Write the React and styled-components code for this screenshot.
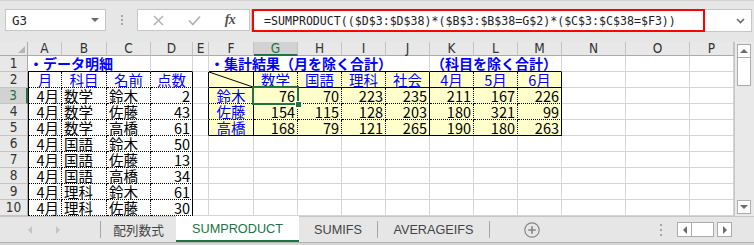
import React from 'react';
import styled, { createGlobalStyle, css } from 'styled-components';

const Global = createGlobalStyle`
  html, body { margin: 0; padding: 0; background: #e6e6e6; }
  body { width: 754px; height: 245px; overflow: hidden; }
`;

const GREEN = '#217346';

const Window = styled.div`
  width: 754px;
  height: 245px;
  display: flex;
  flex-direction: column;
  background: #e6e6e6;
  overflow: hidden;
  font-family: "Noto Sans CJK JP", sans-serif;
`;

/* ---------- formula bar ---------- */
const FormulaBar = styled.div`
  height: 42px;
  flex: none;
  box-sizing: border-box;
  border-top: 1px solid #d2d2d2;
  padding: 8px 2px 0 5px;
  display: flex;
  align-items: flex-start;
`;

const NameBox = styled.div`
  width: 101px;
  height: 22px;
  box-sizing: border-box;
  background: #fff;
  border: 1px solid #c6c6c6;
  display: flex;
  align-items: center;
  justify-content: space-between;
  padding: 0 6px 0 6px;
  font-family: "DejaVu Sans Mono", monospace;
  font-size: 12.5px;
  color: #222;
`;

const DownTri = styled.span`
  width: 0;
  height: 0;
  border-left: 4px solid transparent;
  border-right: 4px solid transparent;
  border-top: 4px solid #6a6a6a;
`;

const Grip = styled.div`
  width: 31px;
  height: 22px;
  display: flex;
  flex-direction: column;
  align-items: center;
  justify-content: center;
  gap: 2px;
`;

const GripDot = styled.span`
  width: 2px;
  height: 2px;
  background: #a6a6a6;
`;

const FxBox = styled.div`
  width: 113px;
  height: 22px;
  box-sizing: border-box;
  background: #fff;
  border: 1px solid #c6c6c6;
  display: flex;
  align-items: center;
  padding-left: 2px;
`;

const FxSlot = styled.div`
  width: 36px;
  height: 20px;
  display: flex;
  align-items: center;
  justify-content: center;
`;

const FxText = styled.span`
  font-family: "Liberation Serif", serif;
  font-style: italic;
  font-weight: 700;
  font-size: 14px;
  color: #555;
  letter-spacing: -0.5px;
`;

const FormulaInput = styled.div`
  flex: 1;
  height: 23px;
  margin-left: 1px;
  box-sizing: border-box;
  background: #fff;
  border: 1px solid #c6c6c6;
  display: flex;
  align-items: stretch;
`;

const Highlight = styled.div`
  width: 453px;
  margin: -1px 0 -1px 0;
  box-sizing: border-box;
  border: 2px solid #ff0000;
  display: flex;
  align-items: center;
  padding-left: 10px;
  font-family: "DejaVu Sans Mono", monospace;
  font-size: 11.6px;
  color: #222;
  white-space: nowrap;
`;

const Chevron = styled.div`
  margin-left: auto;
  width: 22px;
  display: flex;
  align-items: center;
  justify-content: center;
`;

/* ---------- sheet ---------- */
const Main = styled.div`
  height: 174px;
  flex: none;
  display: flex;
`;

const COLS = ['A','B','C','D','E','F','G','H','I','J','K','L','M','N','O','P'];
const WIDTHS = [34,45,44,42,16,45,44,44,44,44,44,44,44,64,64,44];

const Grid = styled.div`
  width: 734px;
  flex: none;
  display: grid;
  grid-template-columns: 28px ${WIDTHS.map(w => w + 'px').join(' ')};
  grid-template-rows: 14px repeat(10, 16px);
  background: #fff;
  overflow: hidden;
`;

const headFont = css`
  font-family: "Liberation Sans Narrow", "DejaVu Sans Condensed", "Liberation Sans", sans-serif;
  font-stretch: condensed;
  font-size: 13.5px;
`;

const Corner = styled.div`
  background: #e8e8e8;
  border-right: 1px solid #ababab;
  border-bottom: 1px solid #ababab;
  box-sizing: border-box;
  display: flex;
  align-items: flex-end;
  justify-content: flex-end;
  padding: 0 2px 2px 0;
`;

const ColHead = styled.div`
  ${headFont};
  box-sizing: border-box;
  background: ${p => (p.$active ? '#d2d2d2' : '#e8e8e8')};
  color: ${p => (p.$active ? GREEN : '#333')};
  border-right: 1px solid #c3c3c3;
  border-bottom: ${p => (p.$active ? `2px solid ${GREEN}` : '1px solid #ababab')};
  display: flex;
  align-items: center;
  justify-content: center;
  line-height: 13px;
`;

const RowHead = styled.div`
  ${headFont};
  box-sizing: border-box;
  background: ${p => (p.$active ? '#d2d2d2' : '#e8e8e8')};
  color: ${p => (p.$active ? GREEN : '#333')};
  border-right: ${p => (p.$active ? `2px solid ${GREEN}` : '1px solid #ababab')};
  border-bottom: 1px solid #c3c3c3;
  display: flex;
  align-items: center;
  justify-content: center;
  line-height: 15px;
`;

const BD = {
  g: '1px solid #d4d4d4',
  s: '1px solid #000',
  d: '1px dotted #000',
};

const Cell = styled.div`
  position: relative;
  box-sizing: border-box;
  min-width: 0;
  grid-column: span ${p => p.$span || 1};
  border-right: ${p => BD[p.$r || 'g']};
  border-bottom: ${p => BD[p.$b || 'g']};
  border-left: ${p => (p.$l ? BD[p.$l] : 'none')};
  background: ${p => p.$bg || '#fff'};
  display: flex;
  align-items: flex-end;
  justify-content: ${p => (p.$align === 'right' ? 'flex-end' : p.$align === 'center' ? 'center' : 'flex-start')};
  padding: 0 2px 0 ${p => (p.$bold ? '1px' : '2px')};
  font-family: "Liberation Sans Narrow", "Noto Sans CJK JP", sans-serif;
  font-size: ${p => (p.$bold ? '14px' : '14.5px')};
  line-height: 15px;
  color: ${p => (p.$blue ? '#0000ff' : '#000')};
  font-weight: ${p => (p.$bold ? 700 : 400)};
  white-space: nowrap;
  overflow: visible;
`;

const Diag = styled.svg`
  position: absolute;
  left: 0;
  top: 0;
  width: 100%;
  height: 100%;
`;

const Selection = styled.div`
  position: absolute;
  top: -2px;
  left: -2px;
  right: -2px;
  bottom: -2px;
  border: 2px solid ${GREEN};
  z-index: 3;
  pointer-events: none;
`;

const Handle = styled.div`
  position: absolute;
  right: -5px;
  bottom: -5px;
  width: 5px;
  height: 5px;
  background: ${GREEN};
  border: 1px solid #fff;
`;

/* ---------- vertical scroll ---------- */
const VScroll = styled.div`
  flex: 1;
  box-sizing: border-box;
  border-left: 1px solid #c6c6c6;
  background: #e9e9e9;
  padding: 2px 3px 2px 2px;
  display: flex;
  flex-direction: column;
`;

const ScrollBtn = styled.div`
  height: 14px;
  box-sizing: border-box;
  background: #fff;
  border: 1px solid #ababab;
  display: flex;
  align-items: center;
  justify-content: center;
`;

const VThumb = styled.div`
  height: 28px;
  box-sizing: border-box;
  background: #fff;
  border: 1px solid #ababab;
  border-top: none;
`;

const Spacer = styled.div`
  flex: 1;
`;

const Tri = styled.span`
  width: 0;
  height: 0;
  ${p => p.$dir === 'up' && css`
    border-left: 4px solid transparent;
    border-right: 4px solid transparent;
    border-bottom: 4px solid ${p.$c || '#6a6a6a'};
  `}
  ${p => p.$dir === 'down' && css`
    border-left: 4px solid transparent;
    border-right: 4px solid transparent;
    border-top: 4px solid ${p.$c || '#6a6a6a'};
  `}
  ${p => p.$dir === 'left' && css`
    border-top: 4px solid transparent;
    border-bottom: 4px solid transparent;
    border-right: 4px solid ${p.$c || '#6a6a6a'};
  `}
  ${p => p.$dir === 'right' && css`
    border-top: 4px solid transparent;
    border-bottom: 4px solid transparent;
    border-left: 4px solid ${p.$c || '#6a6a6a'};
  `}
`;

/* ---------- tab bar ---------- */
const TabBar = styled.div`
  height: 26px;
  flex: none;
  box-sizing: border-box;
  border-top: 1px solid #c6c6c6;
  background: #e6e6e6;
  display: flex;
  align-items: stretch;
`;

const NavArea = styled.div`
  width: 100px;
  display: flex;
  align-items: center;
  padding-left: 28px;
  gap: 24px;
  box-sizing: border-box;
`;

const TabSep = styled.div`
  width: 1px;
  height: 17px;
  align-self: center;
  background: #a6a6a6;
`;

const Tab = styled.div`
  width: ${p => p.$w}px;
  flex: none;
  display: flex;
  align-items: center;
  justify-content: center;
  font-family: "Liberation Sans", "Noto Sans CJK JP", sans-serif;
  font-size: 12.7px;
  color: #444;
  box-sizing: border-box;
  ${p => p.$active && css`
    background: #fff;
    color: ${GREEN};
    margin-top: -1px;
    border-bottom: 2px solid ${GREEN};
    padding-top: 2px;
  `}
`;

const AddBtn = styled.div`
  margin-left: 34px;
  width: 16px;
  display: flex;
  align-items: center;
`;

const TabDots = styled.div`
  margin-left: 119px;
  width: 3px;
  display: flex;
  flex-direction: column;
  justify-content: center;
  align-items: center;
  gap: 3px;
`;

const HScroll = styled.div`
  margin-left: 15px;
  display: flex;
  align-items: center;
`;

const HBtn = styled.div`
  width: 15px;
  height: 15px;
  box-sizing: border-box;
  background: #fff;
  border: 1px solid #ababab;
  display: flex;
  align-items: center;
  justify-content: center;
`;

const HThumb = styled.div`
  width: 22px;
  height: 15px;
  box-sizing: border-box;
  background: #fff;
  border: 1px solid #ababab;
  border-left: none;
  margin-right: 3px;
`;

const BottomEdge = styled.div`
  height: 3px;
  flex: none;
  background: #d6d6d6;
  border-top: 1px solid #b4b4b4;
  box-sizing: border-box;
`;

/* ---------- data ---------- */
const LEFT_HEAD = ['月', '科目', '名前', '点数'];
const LEFT = [
  ['4月', '数学', '鈴木', '2'],
  ['4月', '数学', '佐藤', '43'],
  ['4月', '数学', '高橋', '61'],
  ['4月', '国語', '鈴木', '50'],
  ['4月', '国語', '佐藤', '13'],
  ['4月', '国語', '高橋', '34'],
  ['4月', '理科', '鈴木', '61'],
  ['4月', '理科', '佐藤', '30'],
];
const SUM_HEAD = ['数学', '国語', '理科', '社会', '4月', '5月', '6月'];
const SUM_ROWS = [
  ['鈴木', 76, 70, 223, 235, 211, 167, 226],
  ['佐藤', 154, 115, 128, 203, 180, 321, 99],
  ['高橋', 168, 79, 121, 265, 190, 180, 263],
];
const YELLOW = '#ffffcc';

function rowCells(r) {
  const cells = [];
  let ci = 0;
  while (ci < COLS.length) {
    const c = COLS[ci];
    let spec = { key: c + r };
    if (r === 1) {
      if (c === 'A') spec = { ...spec, span: 3, text: '・データ明細', blue: true, bold: true, b: 's' };
      else if (c === 'D') spec = { ...spec, b: 's' };
      else if (c === 'F') spec = { ...spec, span: 5, text: '・集計結果（月を除く合計）', blue: true, bold: true, b: 's' };
      else if (c === 'K') spec = { ...spec, span: 3, text: '（科目を除く合計）', blue: true, bold: true, b: 's' };
    } else {
      const li = 'ABCD'.indexOf(c);
      if (li >= 0) {
        const val = r === 2 ? LEFT_HEAD[li] : LEFT[r - 3][li];
        spec = {
          ...spec,
          text: val,
          blue: r === 2,
          align: r === 2 ? 'center' : li === 0 || li === 3 ? 'right' : 'left',
          l: li === 0 ? 's' : undefined,
          r: li === 3 ? 's' : 'd',
          b: 'd',
        };
      } else if (c === 'E' && r <= 5) {
        spec = { ...spec, r: 's' };
      } else if (r <= 5) {
        const si = 'FGHIJKLM'.indexOf(c);
        if (si >= 0) {
          const rr = c === 'F' || c === 'J' || c === 'M' ? 's' : 'd';
          const bb = r === 2 || r === 5 ? 's' : 'd';
          spec = { ...spec, r: rr, b: bb, bg: YELLOW };
          if (r === 2) {
            if (si === 0) spec.diag = true;
            else spec = { ...spec, text: SUM_HEAD[si - 1], blue: true, align: 'center' };
          } else {
            const row = SUM_ROWS[r - 3];
            if (si === 0) spec = { ...spec, text: row[0], blue: true, align: 'center' };
            else spec = { ...spec, text: String(row[si]), align: 'right' };
            if (c === 'G' && r === 3) spec.selected = true;
          }
        }
      }
    }
    cells.push(spec);
    ci += spec.span || 1;
  }
  return cells;
}

const ROWS = Array.from({ length: 10 }, (_, i) => i + 1);

export default function App() {
  return (
    <>
      <Global />
      <Window>
        <FormulaBar>
          <NameBox>
            <span>G3</span>
            <DownTri />
          </NameBox>
          <Grip>
            <GripDot />
            <GripDot />
            <GripDot />
          </Grip>
          <FxBox>
            <FxSlot>
              <svg width="11" height="11" viewBox="0 0 11 11">
                <path d="M1 1 L10 10 M10 1 L1 10" stroke="#b4b4b4" strokeWidth="1.6" fill="none" />
              </svg>
            </FxSlot>
            <FxSlot>
              <svg width="13" height="11" viewBox="0 0 13 11">
                <path d="M1 5.5 L4.8 9.5 L12 1.5" stroke="#b4b4b4" strokeWidth="1.8" fill="none" />
              </svg>
            </FxSlot>
            <FxSlot>
              <FxText>fx</FxText>
            </FxSlot>
          </FxBox>
          <FormulaInput>
            <Highlight>=SUMPRODUCT(($D$3:$D$38)*($B$3:$B$38=G$2)*($C$3:$C$38=$F3))</Highlight>
            <Chevron>
              <svg width="9" height="6" viewBox="0 0 9 6">
                <path d="M1 1 L4.5 4.5 L8 1" stroke="#6a6a6a" strokeWidth="1.6" fill="none" />
              </svg>
            </Chevron>
          </FormulaInput>
        </FormulaBar>

        <Main>
          <Grid>
            <Corner>
              <svg width="7" height="7" viewBox="0 0 7 7">
                <path d="M7 0 L7 7 L0 7 Z" fill="#b5b5b5" />
              </svg>
            </Corner>
            {COLS.map(c => (
              <ColHead key={c} $active={c === 'G'}>{c}</ColHead>
            ))}
            {ROWS.map(r => (
              <React.Fragment key={r}>
                <RowHead $active={r === 3}>{r}</RowHead>
                {rowCells(r).map(s => (
                  <Cell
                    key={s.key}
                    $span={s.span}
                    $r={s.r}
                    $b={s.b}
                    $l={s.l}
                    $bg={s.bg}
                    $align={s.align}
                    $blue={s.blue}
                    $bold={s.bold}
                  >
                    {s.text}
                    {s.diag && (
                      <Diag viewBox="0 0 100 100" preserveAspectRatio="none">
                        <line x1="0" y1="0" x2="100" y2="100" stroke="#000" strokeWidth="1" vectorEffect="non-scaling-stroke" />
                      </Diag>
                    )}
                    {s.selected && (
                      <Selection>
                        <Handle />
                      </Selection>
                    )}
                  </Cell>
                ))}
              </React.Fragment>
            ))}
          </Grid>
          <VScroll>
            <ScrollBtn><Tri $dir="up" /></ScrollBtn>
            <VThumb />
            <Spacer />
            <ScrollBtn><Tri $dir="down" /></ScrollBtn>
          </VScroll>
        </Main>

        <TabBar>
          <NavArea>
            <Tri $dir="left" $c="#c4c4c4" />
            <Tri $dir="right" $c="#c4c4c4" />
          </NavArea>
          <TabSep />
          <Tab $w={75}>配列数式</Tab>
          <Tab $w={123} $active>SUMPRODUCT</Tab>
          <Tab $w={78}>SUMIFS</Tab>
          <TabSep />
          <Tab $w={111}>AVERAGEIFS</Tab>
          <TabSep />
          <AddBtn>
            <svg width="16" height="16" viewBox="0 0 16 16">
              <circle cx="8" cy="8" r="7.2" stroke="#858585" strokeWidth="1.2" fill="none" />
              <path d="M8 4.2 V11.8 M4.2 8 H11.8" stroke="#858585" strokeWidth="1.6" />
            </svg>
          </AddBtn>
          <TabDots>
            <GripDot />
            <GripDot />
            <GripDot />
          </TabDots>
          <HScroll>
            <HBtn><Tri $dir="left" /></HBtn>
            <HThumb />
            <HBtn><Tri $dir="right" /></HBtn>
          </HScroll>
        </TabBar>
        <BottomEdge />
      </Window>
    </>
  );
}
